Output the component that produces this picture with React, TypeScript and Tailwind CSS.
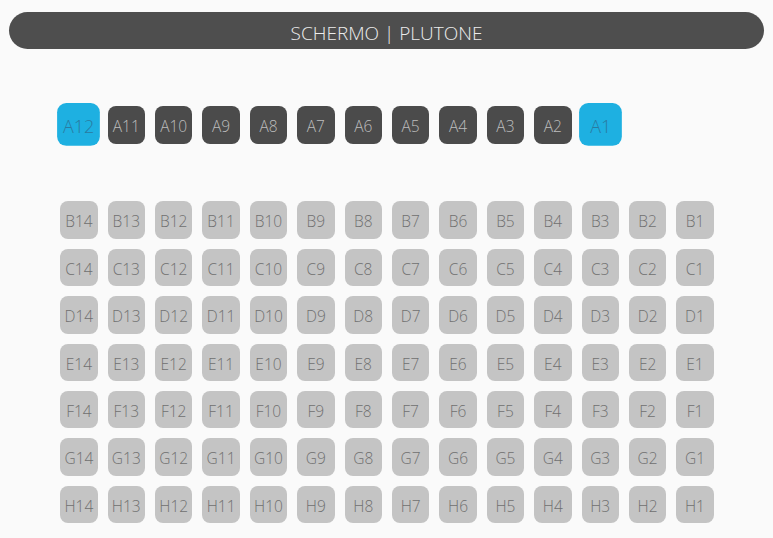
import React from 'react'

const COLS = 14
const rows = ['B', 'C', 'D', 'E', 'F', 'G', 'H']
const selected = ['A12', 'A1']

function Seat({ label, tone }: { label: string; tone: 'dark' | 'light' | 'sel' }) {
  const base = 'w-[37.4px] h-[37.4px] shrink-0 rounded-[8px] flex items-center justify-center pt-[4px] text-[15.5px] font-light'
  if (tone === 'sel') return <div className={`${base} bg-[#1eb0e1] text-[#2a7aa0] scale-[1.155]`}>{label}</div>
  if (tone === 'dark') return <div className={`${base} bg-[#4b4b4b] text-[#bdbdbd]`}>{label}</div>
  return <div className={`${base} bg-[#c4c4c4] text-[#707070]`}>{label}</div>
}

export default function App() {
  return (
    <div className="min-h-[538px] bg-[#fafafa] px-[9px] pt-[12px]" style={{ fontFamily: '"Open Sans", sans-serif' }}>
      <div className="h-[37px] rounded-full bg-[#4e4e4e] flex items-center justify-center text-[19px] font-light text-[#ececec] pt-[6px]">
        SCHERMO | PLUTONE
      </div>
      <div className="flex justify-center pl-[1px]">
        <div className="w-[653.6px]">
          <div className="flex gap-[10px] mt-[57.4px]">
            {Array.from({ length: 12 }, (_, i) => {
              const l = `A${12 - i}`
              return <Seat key={l} label={l} tone={selected.includes(l) ? 'sel' : 'dark'} />
            })}
          </div>
          <div className="flex flex-col gap-[10px] mt-[57.6px]">
            {rows.map(r => (
              <div key={r} className="flex gap-[10px]">
                {Array.from({ length: COLS }, (_, i) => (
                  <Seat key={i} label={`${r}${COLS - i}`} tone="light" />
                ))}
              </div>
            ))}
          </div>
        </div>
      </div>
    </div>
  )
}
